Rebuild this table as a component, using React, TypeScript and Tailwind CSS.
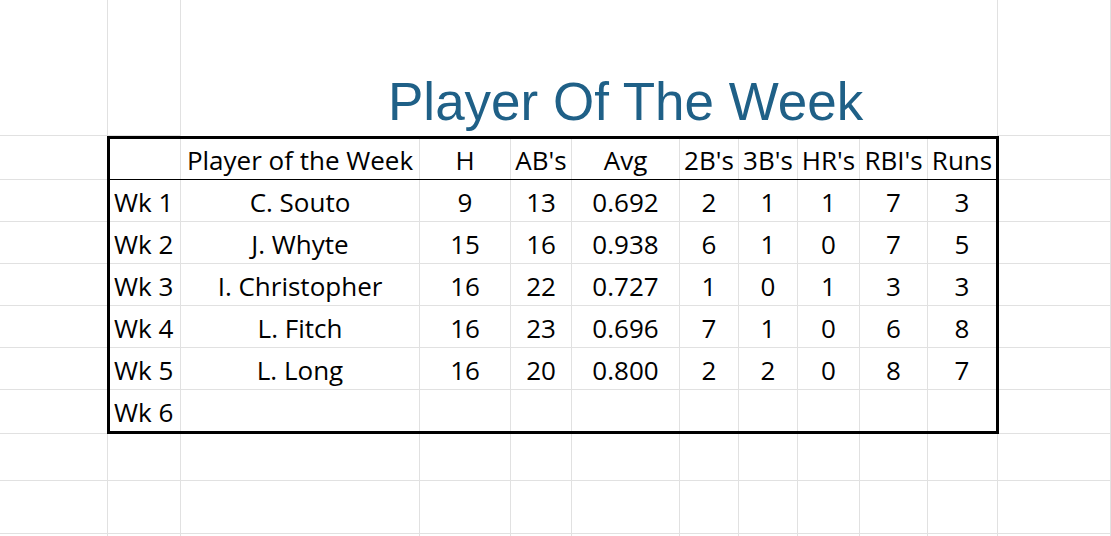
import React from "react";

type Row = {
  week: string;
  player: string;
  stats: string[];
};

const HEADERS = ["", "Player of the Week", "H", "AB's", "Avg", "2B's", "3B's", "HR's", "RBI's", "Runs"];

const ROWS: Row[] = [
  { week: "Wk 1", player: "C. Souto", stats: ["9", "13", "0.692", "2", "1", "1", "7", "3"] },
  { week: "Wk 2", player: "J. Whyte", stats: ["15", "16", "0.938", "6", "1", "0", "7", "5"] },
  { week: "Wk 3", player: "I. Christopher", stats: ["16", "22", "0.727", "1", "0", "1", "3", "3"] },
  { week: "Wk 4", player: "L. Fitch", stats: ["16", "23", "0.696", "7", "1", "0", "6", "8"] },
  { week: "Wk 5", player: "L. Long", stats: ["16", "20", "0.800", "2", "2", "0", "8", "7"] },
  { week: "Wk 6", player: "", stats: ["", "", "", "", "", "", "", ""] },
];

// widths of the ten columns inside the bordered table
const TABLE_COLS = [
  "w-[71px]",
  "w-[239px]",
  "w-[91px]",
  "w-[61px]",
  "w-[108px]",
  "w-[59px]",
  "w-[59px]",
  "w-[62px]",
  "w-[68px]",
  "w-[68px]",
];

// widths of the sheet's columns (each with its grid line on the right)
const SHEET_COLS = [
  "w-[108px]",
  "w-[73px]",
  "w-[239px]",
  "w-[91px]",
  "w-[61px]",
  "w-[108px]",
  "w-[59px]",
  "w-[59px]",
  "w-[62px]",
  "w-[68px]",
  "w-[70px]",
  "w-[113px]",
];

const SIDE_ROWS = ["h-[44px]", "h-[42px]", "h-[42px]", "h-[42px]", "h-[42px]", "h-[42px]", "h-[44px]"];

function Cell({ i, children, last }: { i: number; children?: React.ReactNode; last?: boolean }) {
  return (
    <div
      className={`${TABLE_COLS[i]} shrink-0 h-full flex items-end pb-[6px] leading-none ${
        last ? "" : "border-r border-[#e1e1e1]"
      } ${i === 0 ? "justify-start pl-[4px]" : "justify-center"}`}
    >
      {children}
    </div>
  );
}

function SideColumn({ width }: { width: string }) {
  return (
    <div className={`${width} shrink-0 flex flex-col`}>
      {SIDE_ROWS.map((h, i) => (
        <div key={i} className={`${h} shrink-0 border-b border-[#e1e1e1] ${width === "w-[112px]" ? "border-r" : ""}`} />
      ))}
    </div>
  );
}

export default function App() {
  return (
    <div
      className="w-[1111px] h-[536px] overflow-hidden bg-white text-black text-[26px]"
      style={{ fontFamily: '"Open Sans", "Noto Sans", sans-serif' }}
    >
      {/* Title row */}
      <div className="flex h-[136px]">
        <div className="w-[108px] shrink-0 border-r border-b border-[#e1e1e1]" />
        <div className="w-[73px] shrink-0 border-r border-b border-[#e1e1e1]" />
        <div className="w-[817px] shrink-0 border-r border-[#e1e1e1] flex flex-col justify-end pb-[8px] pl-[207px]">
          <span
            className="text-[53px] leading-none text-[#1f6087] whitespace-nowrap"
            style={{ fontFamily: '"Liberation Sans", Arial, sans-serif' }}
          >
            Player Of The Week
          </span>
        </div>
        <div className="w-[113px] shrink-0 border-r border-b border-[#e1e1e1]" />
      </div>

      {/* Table band */}
      <div className="flex h-[298px]">
        <SideColumn width="w-[107px]" />
        <div className="w-[892px] h-[298px] shrink-0 border-[3px] border-black flex flex-col">
          <div className="flex h-[41px] shrink-0 border-b border-black">
            {HEADERS.map((h, i) => (
              <Cell key={i} i={i} last={i === HEADERS.length - 1}>
                {h}
              </Cell>
            ))}
          </div>
          {ROWS.map((r, ri) => (
            <div
              key={r.week}
              className={`flex shrink-0 ${ri === ROWS.length - 1 ? "h-[41px]" : "h-[42px] border-b border-[#e1e1e1]"}`}
            >
              <Cell i={0}>{r.week}</Cell>
              <Cell i={1}>{r.player}</Cell>
              {r.stats.map((s, si) => (
                <Cell key={si} i={si + 2} last={si === r.stats.length - 1}>
                  {s}
                </Cell>
              ))}
            </div>
          ))}
        </div>
        <SideColumn width="w-[112px]" />
      </div>

      {/* Empty rows below */}
      <div className="flex h-[47px] border-b border-[#e1e1e1]">
        {SHEET_COLS.map((w, i) => (
          <div key={i} className={`${w} shrink-0 border-r border-[#e1e1e1]`} />
        ))}
      </div>
      <div className="flex h-[53px] border-b border-[#e1e1e1]">
        {SHEET_COLS.map((w, i) => (
          <div key={i} className={`${w} shrink-0 border-r border-[#e1e1e1]`} />
        ))}
      </div>
      <div className="flex h-[10px]">
        {SHEET_COLS.map((w, i) => (
          <div key={i} className={`${w} shrink-0 border-r border-[#e1e1e1]`} />
        ))}
      </div>
    </div>
  );
}
